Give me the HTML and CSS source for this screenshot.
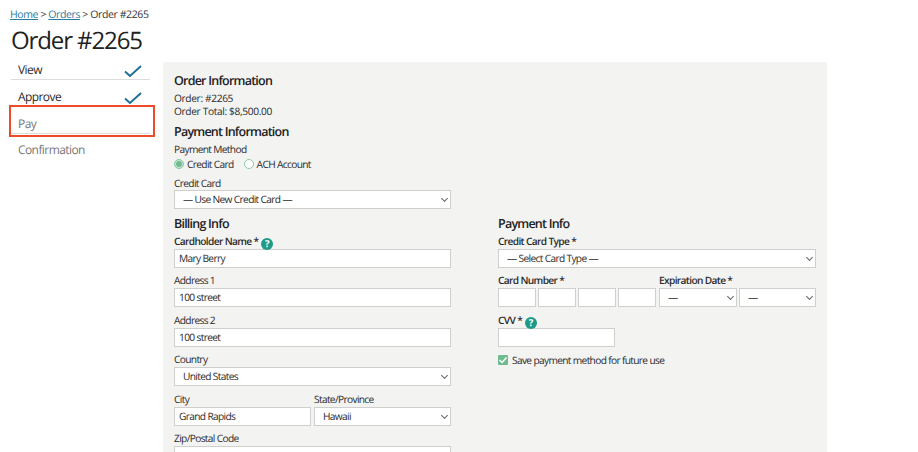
FILE: index.html
```html
<!DOCTYPE html>
<html lang="en">
<head>
<meta charset="utf-8">
<title>Order #2265</title>
<link rel="stylesheet" href="styles.css">
</head>
<body>
<div class="page">
  <nav class="crumbs"><a href="#">Home</a> &gt; <a href="#">Orders</a> &gt; Order #2265</nav>
  <h1 class="title">Order #2265</h1>
  <div class="main">
    <aside class="steps">
      <div class="step done"><span>View</span>
        <svg class="check" viewBox="0 0 18 12" width="18" height="12"><path d="M1 6.5 L6 11 L17 1" fill="none" stroke="#1c6f98" stroke-width="1.9"/></svg>
      </div>
      <div class="step done"><span>Approve</span>
        <svg class="check" viewBox="0 0 18 12" width="18" height="12"><path d="M1 6.5 L6 11 L17 1" fill="none" stroke="#1c6f98" stroke-width="1.9"/></svg>
      </div>
      <div class="step"><span>Pay</span></div>
      <div class="step last"><span>Confirmation</span></div>
      <div class="highlight"></div>
    </aside>
    <section class="panel">
      <h2 class="h-first">Order Information</h2>
      <p class="info">Order: #2265</p>
      <p class="info">Order Total: $8,500.00</p>
      <h2 class="h-pay">Payment Information</h2>
      <div class="lbl">Payment Method</div>
      <div class="radios">
        <span class="radio-item"><span class="radio on"></span>Credit Card</span>
        <span class="radio-item"><span class="radio"></span>ACH Account</span>
      </div>
      <div class="half">
        <div class="lbl">Credit Card</div>
        <div class="field select">— Use New Credit Card —</div>
      </div>
      <div class="cols">
        <div class="col-left">
          <h3>Billing Info</h3>
          <div class="lbl strong">Cardholder Name * <span class="help">?</span></div>
          <div class="field input">Mary Berry</div>
          <div class="lbl gap">Address 1</div>
          <div class="field input">100 street</div>
          <div class="lbl gap">Address 2</div>
          <div class="field input">100 street</div>
          <div class="lbl gap">Country</div>
          <div class="field select">United States</div>
          <div class="row-city">
            <div>
              <div class="lbl gap">City</div>
              <div class="field input">Grand Rapids</div>
            </div>
            <div>
              <div class="lbl gap">State/Province</div>
              <div class="field select">Hawaii</div>
            </div>
          </div>
          <div class="lbl gap">Zip/Postal Code</div>
          <div class="field input"></div>
        </div>
        <div class="col-right">
          <h3>Payment Info</h3>
          <div class="lbl strong">Credit Card Type *</div>
          <div class="field select">— Select Card Type —</div>
          <div class="row-card">
            <div>
              <div class="lbl strong gap">Card Number *</div>
              <div class="card-boxes">
                <div class="field input"></div>
                <div class="field input"></div>
                <div class="field input"></div>
                <div class="field input"></div>
              </div>
            </div>
            <div>
              <div class="lbl strong gap">Expiration Date *</div>
              <div class="exp-boxes">
                <div class="field select">—</div>
                <div class="field select">—</div>
              </div>
            </div>
          </div>
          <div class="lbl strong gap">CVV * <span class="help">?</span></div>
          <div class="field input cvv"></div>
          <div class="save"><span class="box"><svg viewBox="0 0 10 10" width="10" height="10"><path d="M1.5 5 L4 7.5 L8.5 2.5" fill="none" stroke="#fff" stroke-width="1.4"/></svg></span>Save payment method for future use</div>
        </div>
      </div>
    </section>
  </div>
</div>
</body>
</html>
```

FILE: styles.css
```css
* { box-sizing: border-box; }
html, body { margin: 0; height: 452px; overflow: hidden; background: #fff; }
body { font-family: "Open Sans", sans-serif; color: #2b2b2b; font-size: 10.2px; letter-spacing: -0.66px; text-rendering: geometricPrecision; }
.page { padding: 8px 0 0 11px; }
.crumbs { margin-left: -1px; font-size: 10.5px; line-height: 14px; letter-spacing: -0.4px; color: #333; }
.crumbs a { color: #2a7a9e; text-decoration: underline; }
.title { margin: 7px 0 0; font-size: 24px; font-weight: 400; line-height: 24px; letter-spacing: -1.1px; color: #222; }
.main { display: flex; align-items: flex-start; }
.steps { position: relative; width: 139px; margin-right: 13px; flex: none; }
.step { display: flex; justify-content: space-between; align-items: flex-end; height: 27px; padding: 0 8px 1px 7px; font-size: 12px; line-height: 16px; letter-spacing: -0.58px; color: #777; border-bottom: 1px solid #ddd; }
.step.done { color: #2b2b2b; }
.step.last { border-bottom-color: transparent; padding-bottom: 2px; }
.check { margin-bottom: 1px; }
.highlight { position: absolute; left: -2px; top: 52px; width: 146px; height: 32px; border: 2px solid #ee4b2b; }
.panel { width: 664px; height: 400px; margin-top: 9px; padding: 10px 11px; background: #f3f3f2; border-radius: 2px; flex: none; }
h2 { margin: 0; font-size: 12.5px; font-weight: 600; line-height: 17px; letter-spacing: -0.78px; color: #222; }
.h-first { margin-bottom: 3px; }
.h-pay { margin: 5px 0 2px; }
h3 { margin: 0 0 1.5px; font-size: 12.5px; font-weight: 600; line-height: 17px; letter-spacing: -0.78px; color: #222; }
.info { margin: 0; line-height: 13px; letter-spacing: -0.36px; }
.lbl { height: 14px; line-height: 14px; color: #2b2b2b; }
.lbl.strong { font-weight: 600; }
h3 + .lbl { margin-bottom: 1px; }
.lbl.gap { margin: 5.5px 0 1px; }
.radios { display: flex; gap: 10px; height: 16px; align-items: center; }
.radio-item { display: flex; align-items: center; }
.radio { width: 10px; height: 10px; border-radius: 50%; border: 1px solid #8ccba6; background: #fff; margin-right: 3px; }
.radio.on { background: #6fbb8f; box-shadow: inset 0 0 0 1px #cfe9d9; }
.half { width: 277px; margin-top: 4px; }
.field { height: 19px; line-height: 17px; background: #fff; border: 1px solid #cfcfcd; padding: 0 4px; }
.select { padding-left: 8px; position: relative; }
.select::after { content: ""; position: absolute; right: 3px; top: 5px; width: 4px; height: 4px; border-right: 1px solid #666; border-bottom: 1px solid #666; transform: rotate(45deg); }
.cols { display: flex; gap: 47px; margin-top: 6px; }
.col-left { width: 277px; flex: none; }
.col-right { width: 318px; flex: none; }
.help { display: inline-flex; width: 12px; height: 12px; border-radius: 50%; background: #1f9a86; color: #fff; font-size: 9.5px; font-weight: 700; align-items: center; justify-content: center; vertical-align: -2px; margin-left: 1px; letter-spacing: 0; }
.row-city { display: grid; grid-template-columns: 137px 137px; gap: 3px; }
.row-card { display: flex; gap: 3px; }
.card-boxes { display: grid; grid-template-columns: repeat(4, 38px); gap: 2px; width: 158px; }
.exp-boxes { display: grid; grid-template-columns: 78px 77px; gap: 2px; }
.cvv { width: 117px; }
.save { display: flex; align-items: center; margin-top: 6px; height: 14px; }
.box { display: flex; align-items: center; justify-content: center; width: 10px; height: 10px; background: #6fbb8f; border-radius: 1px; margin-right: 4px; }
```
